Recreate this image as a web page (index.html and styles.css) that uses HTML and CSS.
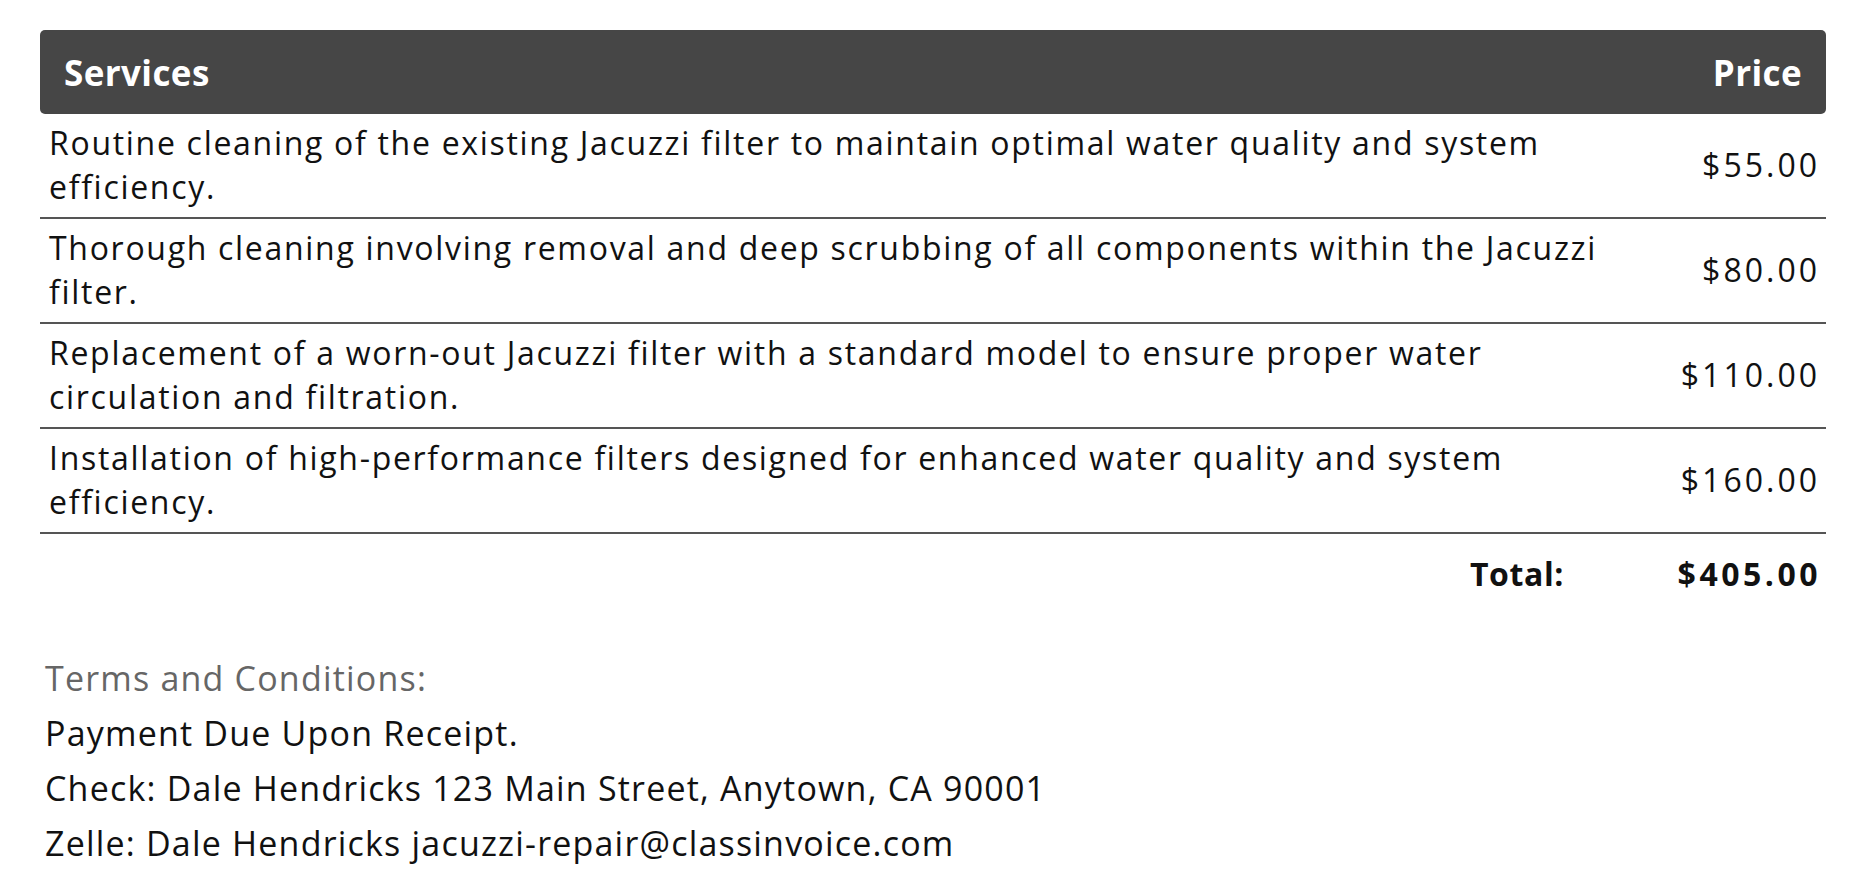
FILE: index.html
```html
<!DOCTYPE html>
<html lang="en">
<head>
<meta charset="utf-8">
<title>Invoice Services</title>
<link rel="stylesheet" href="styles.css">
</head>
<body>
<div class="page">
  <table class="services">
    <thead>
      <tr>
        <th class="col-desc">Services</th>
        <th class="col-price">Price</th>
      </tr>
    </thead>
    <tbody>
      <tr class="item">
        <td class="desc">Routine cleaning of the existing Jacuzzi filter to maintain optimal water quality and system efficiency.</td>
        <td class="price">$55.00</td>
      </tr>
      <tr class="item">
        <td class="desc">Thorough cleaning involving removal and deep scrubbing of all components within the Jacuzzi filter.</td>
        <td class="price">$80.00</td>
      </tr>
      <tr class="item">
        <td class="desc">Replacement of a worn-out Jacuzzi filter with a standard model to ensure proper water circulation and filtration.</td>
        <td class="price">$110.00</td>
      </tr>
      <tr class="item">
        <td class="desc">Installation of high-performance filters designed for enhanced water quality and system efficiency.</td>
        <td class="price">$160.00</td>
      </tr>
      <tr class="total">
        <td class="total-label">Total:</td>
        <td class="total-value">$405.00</td>
      </tr>
    </tbody>
  </table>

  <div class="terms">
    <p class="terms-title">Terms and Conditions:</p>
    <p>Payment Due Upon Receipt.</p>
    <p>Check: Dale Hendricks 123 Main Street, Anytown, CA 90001</p>
    <p>Zelle: Dale Hendricks jacuzzi-repair@classinvoice.com</p>
  </div>
</div>
</body>
</html>
```

FILE: styles.css
```css
html, body {
  margin: 0;
  padding: 0;
  background: #ffffff;
}

body {
  font-family: "Open Sans", "Liberation Sans", sans-serif;
  color: #111111;
}

.page {
  padding: 30px 42px 0 40px;
}

.services {
  width: 1786px;
  border-collapse: collapse;
  table-layout: fixed;
}

.services th {
  background: #464646;
  color: #ffffff;
  font-size: 35px;
  font-weight: 700;
  letter-spacing: 0.4px;
  height: 84px;
  padding: 0;
  vertical-align: middle;
}

.services th.col-desc {
  text-align: left;
  padding-left: 24px;
  border-radius: 5px 0 0 5px;
}

.services th.col-price {
  width: 158px;
  text-align: right;
  padding-right: 24px;
  border-radius: 0 5px 5px 0;
}

.item td {
  border-bottom: 2px solid #555555;
  font-size: 32px;
  letter-spacing: 1.7px;
  line-height: 44px;
  padding: 7px 8px 8px 9px;
  vertical-align: middle;
}

.item td.price {
  text-align: right;
  letter-spacing: 3px;
  padding-right: 6px;
}

.total td {
  font-size: 32px;
  font-weight: 700;
  padding: 20px 9px 0 8px;
  line-height: 40px;
}

.total td.total-label {
  text-align: right;
  padding-right: 80px;
  letter-spacing: 0.6px;
}

.total td.total-value {
  text-align: right;
  letter-spacing: 3.5px;
  padding-right: 5px;
}

.terms {
  margin-top: 57px;
  padding-left: 5px;
}

.terms p {
  margin: 0;
  font-size: 34px;
  letter-spacing: 1.2px;
  line-height: 55px;
}

.terms .terms-title {
  color: #666666;
}
```
